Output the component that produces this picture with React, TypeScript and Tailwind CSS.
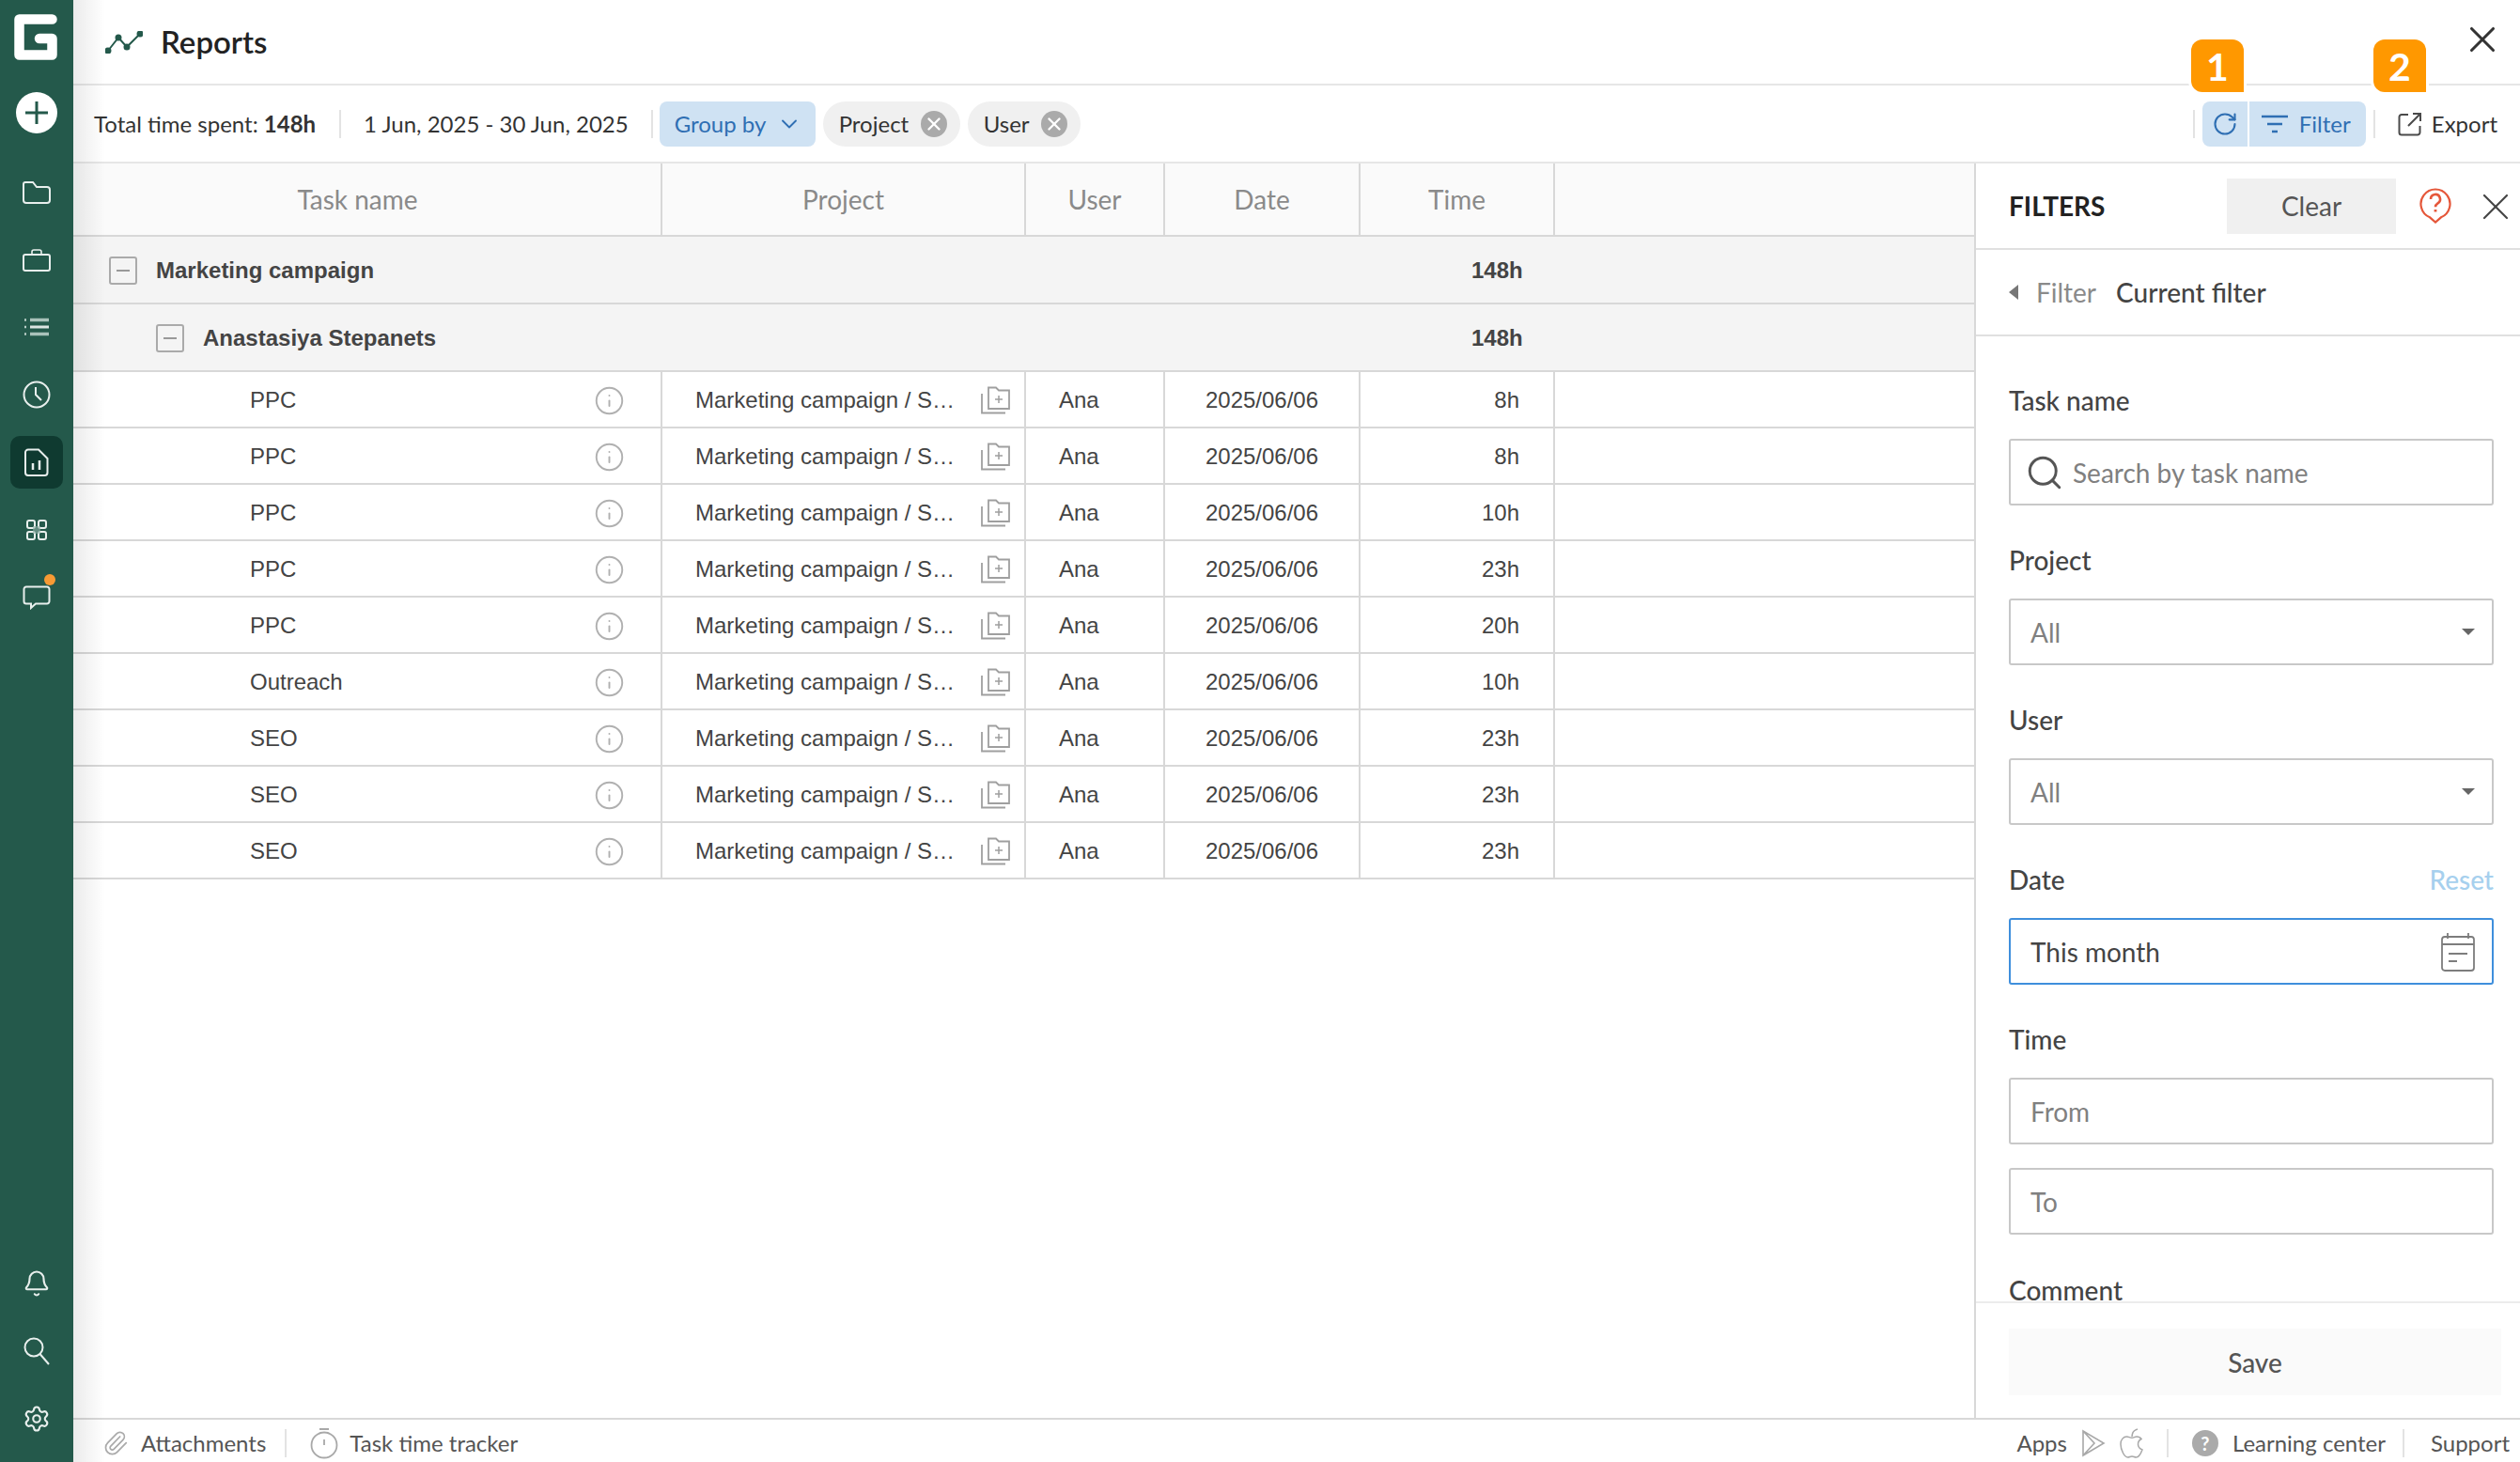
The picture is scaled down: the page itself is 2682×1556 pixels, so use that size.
import { Bell, Settings, X, RotateCw, ChevronDown, Search, Info, Paperclip } from "lucide-react";

const LATO = "font-['Lato','Noto_Sans',sans-serif]";
const ARIAL = "font-['Liberation_Sans',Arial,sans-serif]";

const rows = [
    ["PPC", "8h"],
    ["PPC", "8h"],
    ["PPC", "10h"],
    ["PPC", "23h"],
    ["PPC", "20h"],
    ["Outreach", "10h"],
    ["SEO", "23h"],
    ["SEO", "23h"],
    ["SEO", "23h"],
];

const Logo = () => (
    <svg viewBox="0 0 46 49" className="w-[46px] h-[49px] -ml-[2px]" fill="none" stroke="#fff" strokeWidth="10.5" strokeLinejoin="round" strokeLinecap="round">
        <path d="M40.5 5.5 H5.5 V43.5 H40.5 V26 H27" />
    </svg>
);

const ReportsIcon = () => (
    <svg viewBox="0 0 40 24" className="w-[40px] h-[24px]" fill="none" stroke="#24594b" strokeWidth="2">
        <path d="M3 21 L14 7 L23 17 L37 3" />
        <circle cx="3" cy="21" r="2.5" fill="#24594b" />
        <circle cx="14" cy="7" r="2.5" fill="#24594b" />
        <circle cx="23" cy="17" r="2.5" fill="#24594b" />
        <circle cx="37" cy="3" r="2.5" fill="#24594b" />
    </svg>
);

const FolderIcon = () => (
    <svg viewBox="0 0 30 24" className="w-[30px] h-[24px]" fill="none" stroke="#e8efed" strokeWidth="2">
        <path d="M3 1 H11 L15 6 H26 a3 3 0 0 1 3 3 V20 a3 3 0 0 1 -3 3 H4 a3 3 0 0 1 -3 -3 V3 a2 2 0 0 1 2 -2 Z" />
    </svg>
);

const BriefcaseIcon = () => (
    <svg viewBox="0 0 30 24" className="w-[30px] h-[24px]" fill="none" stroke="#e8efed" strokeWidth="2">
        <rect x="1" y="6" width="28" height="17" rx="2" />
        <path d="M10 6 V3 a2 2 0 0 1 2 -2 H18 a2 2 0 0 1 2 2 V6" strokeWidth="1.6" />
    </svg>
);

const ListIcon = () => (
    <svg viewBox="0 0 28 20" className="w-[28px] h-[20px]" fill="none">
        <path d="M7 2.5 H27 M7 17.5 H27" stroke="#a9c2ba" strokeWidth="3.4" />
        <path d="M7 10 H27" stroke="#dbe5e2" strokeWidth="3" />
        <path d="M1 2.5 H3 M1 10 H3 M1 17.5 H3" stroke="#b9cec7" strokeWidth="2.4" />
    </svg>
);

const ClockIcon = () => (
    <svg viewBox="0 0 30 30" className="w-[30px] h-[30px]" fill="none" stroke="#e8efed" strokeWidth="2">
        <circle cx="15" cy="15" r="13.5" />
        <path d="M14 7 V15 L20 21" />
    </svg>
);

const ReportFileIcon = () => (
    <svg viewBox="0 0 26 30" className="w-[26px] h-[30px]" fill="none" stroke="#e8efed" strokeWidth="2">
        <path d="M4 1.5 H15 L24.5 11 V26 a3 3 0 0 1 -3 3 H4 a3 3 0 0 1 -3 -3 V4.5 a3 3 0 0 1 3 -3 Z" />
        <path d="M9 23 V16 M16 23 V13" strokeWidth="2.5" />
    </svg>
);

const AppsIcon = () => (
    <svg viewBox="0 0 22 22" className="w-[22px] h-[22px]" fill="none" stroke="#e8efed" strokeWidth="2">
        <rect x="1" y="1" width="8" height="8" rx="2" />
        <rect x="13" y="1" width="8" height="8" rx="2" />
        <rect x="1" y="13" width="8" height="8" rx="2" />
        <rect x="13" y="13" width="8" height="8" rx="2" />
        <rect x="7" y="7" width="8" height="8" fill="#8fb0a6" stroke="none" opacity="0.6" />
    </svg>
);

const ChatIcon = () => (
    <svg viewBox="0 0 30 26" className="w-[30px] h-[26px]" fill="none" stroke="#e8efed" strokeWidth="2">
        <path d="M4 1.5 H26 a2.5 2.5 0 0 1 2.5 2.5 V17 a2.5 2.5 0 0 1 -2.5 2.5 H14 L9 24 V19.5 H4 a2.5 2.5 0 0 1 -2.5 -2.5 V4 a2.5 2.5 0 0 1 2.5 -2.5 Z" />
    </svg>
);

const SideSearchIcon = () => (
    <svg viewBox="0 0 28 30" className="w-[28px] h-[30px]" fill="none" stroke="#e8efed" strokeWidth="2">
        <circle cx="11" cy="11" r="9.5" />
        <path d="M17.5 18 L27 29" />
    </svg>
);

const FolderPlusIcon = () => (
    <svg viewBox="0 0 32 30" className="w-[32px] h-[30px] shrink-0" fill="none" stroke="#9f9f9f" strokeWidth="1.8">
        <path d="M9 1.5 H17 L20 4.5 H31 V24 H9 Z" />
        <path d="M2 8 V28.5 H27" />
        <path d="M20 10 V18 M16 14 H24" strokeWidth="1.5" />
    </svg>
);

const FilterLines = () => (
    <svg viewBox="0 0 28 20" className="w-[28px] h-[20px]" fill="none" stroke="#2f6fb3" strokeWidth="2.4">
        <path d="M0 2 H28 M6 10 H22 M11 18 H17" />
    </svg>
);

const ExportIcon = () => (
    <svg viewBox="0 0 26 26" className="w-[26px] h-[26px]" fill="none" stroke="#4a4a4a" strokeWidth="2">
        <path d="M11 3 H4 a2.5 2.5 0 0 0 -2.5 2.5 V22 A2.5 2.5 0 0 0 4 24.5 H21 a2.5 2.5 0 0 0 2.5 -2.5 V15" />
        <path d="M11 15 L24 2 M16 2 H24 V10" />
    </svg>
);

const HelpIcon = () => (
    <svg viewBox="0 0 34 38" className="w-[34px] h-[38px]" fill="none" stroke="#e5573a" strokeWidth="2.2">
        <path d="M11 31.3 a15.5 15.5 0 1 1 12 0 L17 36.5 Z" />
        <path d="M12 12 a5 5 0 1 1 7.5 4.3 c-1.5 1 -2.5 2 -2.5 4" strokeWidth="2.6" />
        <path d="M17 23 V25.5" strokeWidth="2.8" />
    </svg>
);

const CalendarIcon = () => (
    <svg viewBox="0 0 36 42" className="w-[36px] h-[42px]" fill="none" stroke="#7d7d7d" strokeWidth="1.8">
        <rect x="1" y="5" width="34" height="36" rx="3" />
        <path d="M1 13 H35 M7 1 V7 M29 1 V7 M8 23 H28 M8 31 H17" />
    </svg>
);

const TimerIcon = () => (
    <svg viewBox="0 0 30 34" className="w-[30px] h-[34px]" fill="none" stroke="#a8a8a8" strokeWidth="1.8">
        <circle cx="15" cy="19" r="13.5" />
        <path d="M10 2 H20 M15 13 V19" />
    </svg>
);

const PlayStoreIcon = () => (
    <svg viewBox="0 0 26 30" className="w-[26px] h-[30px]" fill="none" stroke="#a8a8a8" strokeWidth="1.6">
        <path d="M2 2 L24 15 L2 28 Z M2 2 L14 15 L2 28" />
    </svg>
);

const AppleIcon = () => (
    <svg viewBox="0 0 26 32" className="w-[26px] h-[32px]" fill="none" stroke="#a8a8a8" strokeWidth="1.5">
        <path d="M18 9 c-2 0 -3 1.2 -5 1.2 S9.5 9 7.5 9 C4 9 1 12 1 17 c0 6 4 14 7.5 14 c2 0 2.5 -1 4.5 -1 s2.5 1 4.5 1 c2.5 0 5 -4 6.5 -8 c-3 -1.2 -4.5 -3.5 -4.5 -6 c0 -2.5 1.5 -4.5 3.5 -5.5 C22 10 20 9 18 9 Z" />
        <path d="M13 9 c0 -4 2.5 -7 6 -8" />
    </svg>
);

const Caret = () => (
    <div className="w-0 h-0 border-x-[7px] border-x-transparent border-t-[7px] border-t-[#666]" />
);

const Minus = () => (
    <div className="w-[30px] h-[30px] border-2 border-[#aaa] rounded-[3px] flex items-center justify-center shrink-0">
        <div className="w-[14px] h-[2px] bg-[#999]" />
    </div>
);

const Sep = () => <div className="w-[2px] h-[30px] bg-[#e3e3e3]" />;

const Chip = ({ label, className }: { label: string; className: string }) => (
    <div className={`h-[48px] rounded-full bg-[#f0f0f0] flex items-center pl-[17px] pr-[14px] text-[24px] text-[#333] ${className}`}>
        <span>{label}</span>
        <div className="ml-auto w-[28px] h-[28px] rounded-full bg-[#aaa] flex items-center justify-center">
            <X className="w-[22px] h-[22px] text-white" strokeWidth={2.6} />
        </div>
    </div>
);

const Badge = ({ n, className }: { n: string; className: string }) => (
    <div className={`absolute top-[42px] w-[56px] h-[56px] bg-[#ff9800] rounded-t-[12px] rounded-bl-[12px] ring-[3px] ring-white flex items-center justify-center text-white text-[41px] font-bold leading-none ${className}`}>
        {n}
    </div>
);

const Field = ({ label, right, children }: { label: string; right?: string; children: React.ReactNode }) => (
    <div className="mb-[38px]">
        <div className="h-[40px] flex items-center justify-between text-[28px] leading-[24px] font-medium text-[#444]">
            <span>{label}</span>
            {right && <span className="text-[#a6d0ee]">{right}</span>}
        </div>
        <div className="mt-[21px]">{children}</div>
    </div>
);

const boxCls = "h-[71px] border-2 border-[#c8c8c8] rounded-[3px] flex items-center px-[21px] text-[28px] text-[#808080] bg-white";

const GroupRow = ({ name, indent }: { name: string; indent: string }) => (
    <div className={`h-[72px] pt-[2px] bg-[#f4f4f4] border-b-2 border-[#d8d8d8] flex items-center font-bold text-[24px] text-[#444] ${ARIAL}`}>
        <div className={`flex items-center gap-[20px] ${indent}`}>
            <Minus />
            <span>{name}</span>
        </div>
        <div className="absolute left-[1488px] w-[54px] text-right">148h</div>
    </div>
);

export default function App() {
    return (
        <div className={`w-screen h-screen overflow-hidden flex bg-white text-[#333] ${LATO}`}>
            {/* sidebar */}
            <aside className="w-[78px] shrink-0 bg-[#24594b] flex flex-col items-center pt-[15px] pb-[10px]">
                <Logo />
                <div className="mt-[34px] w-[44px] h-[44px] rounded-full bg-white flex items-center justify-center">
                    <svg viewBox="0 0 26 26" className="w-[26px] h-[26px]" stroke="#24594b" strokeWidth="3"><path d="M13 1 V25 M1 13 H25" /></svg>
                </div>
                <nav className="mt-[27px] flex flex-col items-center text-[#e8efed]">
                    <div className="h-[72px] flex items-center"><FolderIcon /></div>
                    <div className="h-[71px] flex items-center"><BriefcaseIcon /></div>
                    <div className="h-[71px] flex items-center"><ListIcon /></div>
                    <div className="h-[73px] flex items-center"><ClockIcon /></div>
                    <div className="h-[72px] flex items-center">
                        <div className="w-[56px] h-[56px] rounded-[10px] bg-[#0f3a30] flex items-center justify-center"><ReportFileIcon /></div>
                    </div>
                    <div className="h-[72px] flex items-center"><AppsIcon /></div>
                    <div className="h-[71px] flex items-center relative">
                        <ChatIcon />
                        <div className="absolute right-[-5px] top-[11px] w-[12px] h-[12px] rounded-full bg-[#f79a34]" />
                    </div>
                </nav>
                <div className="mt-auto flex flex-col items-center text-[#e8efed]">
                    <div className="h-[72px] flex items-center"><Bell className="w-[30px] h-[30px]" strokeWidth={1.7} /></div>
                    <div className="h-[72px] flex items-center"><SideSearchIcon /></div>
                    <div className="h-[72px] flex items-center"><Settings className="w-[30px] h-[30px]" strokeWidth={1.7} /></div>
                </div>
            </aside>

            <main className="relative flex-1 min-w-0 flex flex-col">
                {/* soft shadow cast by the sidebar */}
                <div className="absolute left-0 top-0 bottom-0 w-[34px] z-20 pointer-events-none bg-gradient-to-r from-[#00000014] to-transparent" />

                <header className="relative h-[91px] shrink-0 border-b-2 border-[#e6e6e6] flex items-center pl-[34px]">
                    <ReportsIcon />
                    <h1 className="ml-[19px] text-[33px] font-semibold text-[#222]">Reports</h1>
                    <X className="absolute left-[2541px] top-[19px] w-[46px] h-[46px] text-[#333]" strokeWidth={1.6} />
                </header>

                <Badge n="1" className="left-[2254px] z-10" />
                <Badge n="2" className="left-[2448px] z-10" />

                <div className="h-[83px] shrink-0 border-b-2 border-[#e6e6e6] flex items-center pl-[22px] pr-[24px] text-[24px]">
                    <span>Total time spent: <b>148h</b></span>
                    <div className="ml-[25px]"><Sep /></div>
                    <span className="ml-[24px]">1 Jun, 2025 - 30 Jun, 2025</span>
                    <div className="ml-[24px]"><Sep /></div>
                    <div className="ml-[7px] w-[166px] h-[48px] rounded-[8px] bg-[#cfe2f3] text-[#2f6fb3] flex items-center pl-[16px]">
                        <span>Group by</span>
                        <ChevronDown className="ml-[11px] w-[28px] h-[28px]" strokeWidth={1.6} />
                    </div>
                    <Chip label="Project" className="ml-[8px] w-[146px]" />
                    <Chip label="User" className="ml-[8px] w-[120px]" />

                    <div className="ml-auto flex items-center">
                        <Sep />
                        <div className="ml-[8px] w-[48px] h-[48px] rounded-l-[8px] bg-[#cfe2f3] flex items-center justify-center">
                            <RotateCw className="w-[28px] h-[28px] text-[#2f6fb3]" strokeWidth={1.8} />
                        </div>
                        <div className="ml-[2px] w-[124px] h-[48px] rounded-r-[8px] bg-[#cfe2f3] text-[#2f6fb3] flex items-center pl-[13px] gap-[12px]">
                            <FilterLines />
                            <span>Filter</span>
                        </div>
                        <div className="ml-[8px]"><Sep /></div>
                        <div className="ml-[24px]"><ExportIcon /></div>
                        <span className="ml-[10px]">Export</span>
                    </div>
                </div>

                <div className="flex-1 min-h-0 flex">
                    {/* table */}
                    <section className="relative flex-1 min-w-0">
                        <div className="grid grid-cols-[627px_387px_148px_208px_207px_1fr] h-[78px] bg-[#fafafa] border-b-2 border-[#d8d8d8] text-[28px] text-[#8a8a8a]">
                            <div className="border-r-2 border-[#d8d8d8] flex items-center justify-center pr-[20px]">Task name</div>
                            {["Project", "User", "Date", "Time"].map((h) => (
                                <div key={h} className="border-r-2 border-[#d8d8d8] flex items-center justify-center">{h}</div>
                            ))}
                            <div />
                        </div>
                        <GroupRow name="Marketing campaign" indent="pl-[38px]" />
                        <GroupRow name="Anastasiya Stepanets" indent="pl-[88px]" />
                        {rows.map(([task, time], i) => (
                            <div key={i} className={`grid grid-cols-[627px_387px_148px_208px_207px_1fr] h-[60px] border-b-2 border-[#d8d8d8] text-[24px] text-[#444] ${ARIAL}`}>
                                <div className="border-r-2 border-[#d8d8d8] pt-[2px] flex items-center pl-[188px] pr-[38px] justify-between">
                                    <span>{task}</span>
                                    <Info className="w-[33px] h-[33px] text-[#b0b0b0]" strokeWidth={1.4} />
                                </div>
                                <div className="border-r-2 border-[#d8d8d8] pt-[2px] flex items-center pl-[35px] pr-[15px] justify-between">
                                    <span>Marketing campaign / S…</span>
                                    <FolderPlusIcon />
                                </div>
                                <div className="border-r-2 border-[#d8d8d8] pt-[2px] flex items-center pl-[35px]">Ana</div>
                                <div className="border-r-2 border-[#d8d8d8] pt-[2px] flex items-center justify-center">2025/06/06</div>
                                <div className="border-r-2 border-[#d8d8d8] pt-[2px] flex items-center justify-end pr-[36px]">{time}</div>
                                <div />
                            </div>
                        ))}
                    </section>

                    {/* filters panel */}
                    <aside className="w-[581px] shrink-0 border-l-2 border-[#d8d8d8] flex flex-col overflow-hidden">
                        <div className="h-[92px] shrink-0 border-b-2 border-[#e0e0e0] flex items-center pl-[35px] relative">
                            <span className="text-[28px] font-bold text-[#222]">FILTERS</span>
                            <div className="ml-auto mr-[132px] w-[180px] h-[59px] bg-[#f0f0f0] flex items-center justify-center text-[28px] text-[#555]">Clear</div>
                            <div className="absolute left-[472px] top-[26px]"><HelpIcon /></div>
                            <X className="absolute left-[529px] top-[22px] w-[48px] h-[48px] text-[#444]" strokeWidth={1.1} />
                        </div>
                        <div className="h-[92px] shrink-0 border-b-2 border-[#e0e0e0] flex items-center pl-[35px] text-[28px]">
                            <div className="w-0 h-0 border-y-[8px] border-y-transparent border-r-[10px] border-r-[#777]" />
                            <span className="ml-[19px] text-[#8a8a8a]">Filter</span>
                            <span className="ml-[21px] font-medium text-[#444]">Current filter</span>
                        </div>
                        <div className="flex-1 min-h-0 pt-[48px] pl-[35px] pr-[28px]">
                            <Field label="Task name">
                                <div className={boxCls}>
                                    <Search className="w-[42px] h-[42px] text-[#555] -ml-[6px]" strokeWidth={1.7} />
                                    <span className="ml-[9px]">Search by task name</span>
                                </div>
                            </Field>
                            <Field label="Project">
                                <div className={`${boxCls} justify-between pr-[18px]`}><span>All</span><Caret /></div>
                            </Field>
                            <Field label="User">
                                <div className={`${boxCls} justify-between pr-[18px]`}><span>All</span><Caret /></div>
                            </Field>
                            <Field label="Date" right="Reset">
                                <div className={`${boxCls} !border-[#3f8fdc] !text-[#444] justify-between pr-[18px]`}><span>This month</span><CalendarIcon /></div>
                            </Field>
                            <Field label="Time">
                                <div className={boxCls}>From</div>
                                <div className={`${boxCls} mt-[25px]`}>To</div>
                            </Field>
                            <div className="pt-[8px] h-[34px] text-[28px] leading-[26px] font-medium text-[#444]">Comment</div>
                        </div>
                        <div className="h-[124px] shrink-0 border-t-2 border-[#ececec] pt-[27px] pl-[35px] pr-[20px]">
                            <div className="h-[71px] bg-[#fafafa] flex items-center justify-center text-[28px] font-medium text-[#555]">Save</div>
                        </div>
                    </aside>
                </div>

                {/* footer */}
                <footer className="h-[47px] shrink-0 border-t-2 border-[#d8d8d8] pt-[4px] flex items-center pl-[31px] pr-[11px] text-[24px] text-[#555]">
                    <Paperclip className="w-[28px] h-[28px] text-[#aaa]" strokeWidth={1.5} />
                    <span className="ml-[13px]">Attachments</span>
                    <div className="ml-[20px]"><Sep /></div>
                    <div className="ml-[25px]"><TimerIcon /></div>
                    <span className="ml-[12px]">Task time tracker</span>
                    <span className="ml-auto">Apps</span>
                    <div className="ml-[15px]"><PlayStoreIcon /></div>
                    <div className="ml-[15px]"><AppleIcon /></div>
                    <div className="ml-[24px]"><Sep /></div>
                    <div className="ml-[25px] w-[28px] h-[28px] rounded-full bg-[#aaa] flex items-center justify-center text-white text-[20px] font-bold">?</div>
                    <span className="ml-[15px]">Learning center</span>
                    <div className="ml-[18px]"><Sep /></div>
                    <span className="ml-[28px]">Support</span>
                </footer>
            </main>
        </div>
    );
}
